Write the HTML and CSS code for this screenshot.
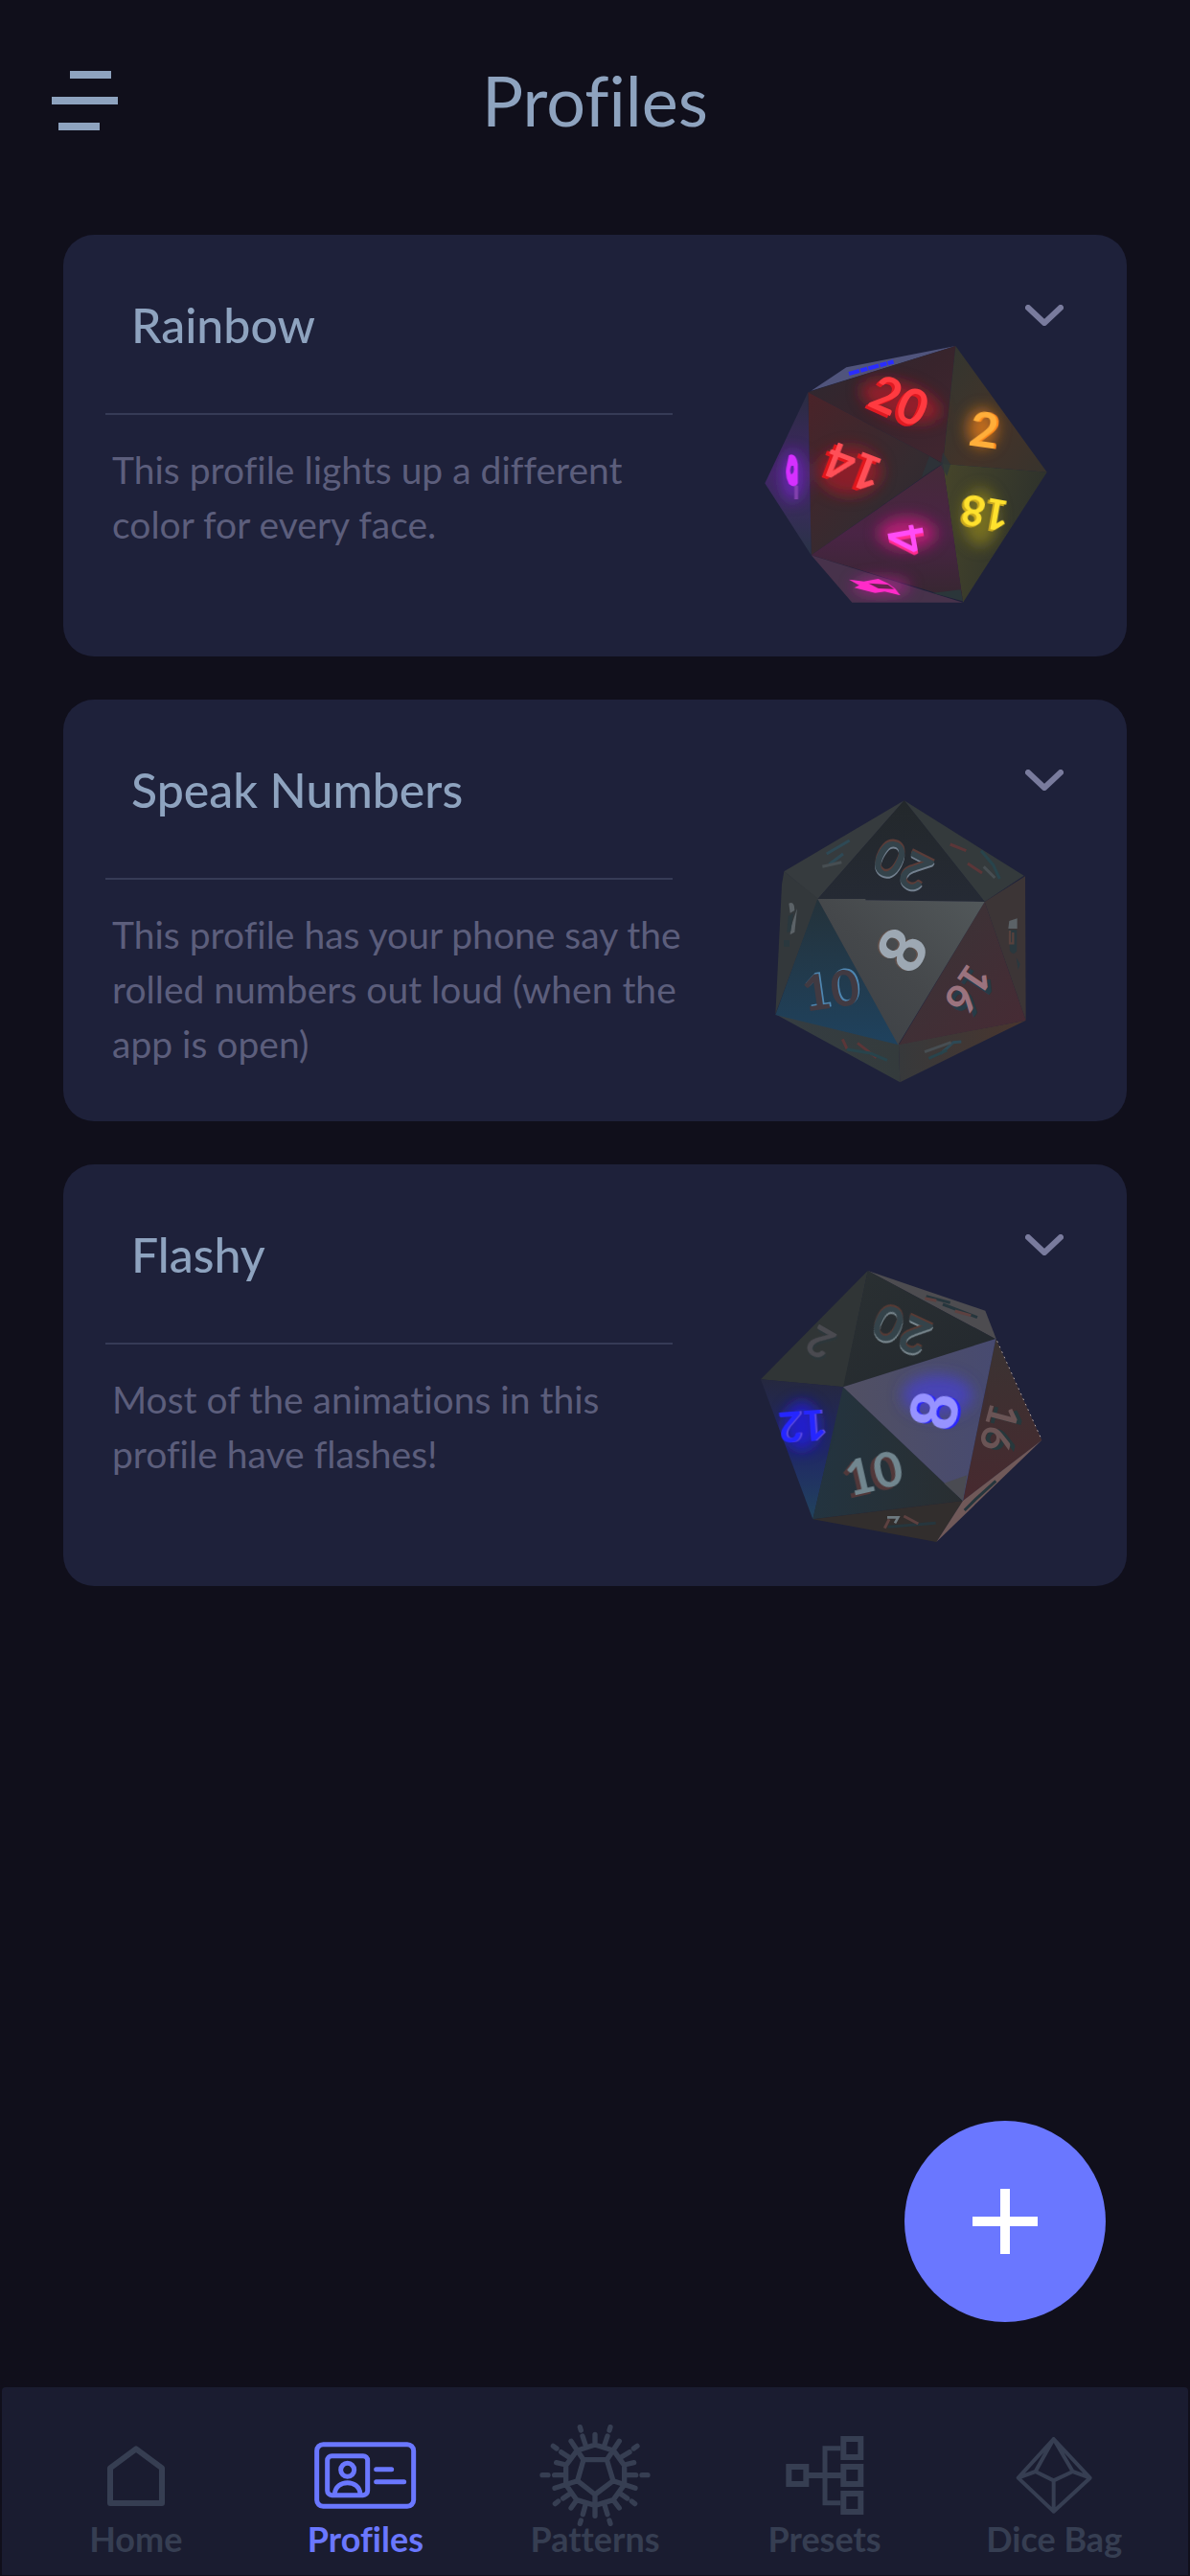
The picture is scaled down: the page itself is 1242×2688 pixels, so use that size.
FILE: index.html
```html
<!DOCTYPE html>
<html lang="en">
<head>
<meta charset="utf-8">
<meta name="viewport" content="width=device-width, initial-scale=1">
<title>Profiles</title>
<link rel="stylesheet" href="styles.css">
</head>
<body>
<header class="topbar">
  <button class="menu" type="button" aria-label="Menu">
    <svg viewBox="0 0 70 64" aria-hidden="true"><path d="M19 0h43v8H19zM0 27h69v8H0zM7 54h43v8H7z"/></svg>
  </button>
  <h1 class="title">Profiles</h1>
</header>

<main class="content">
  <section class="cards" aria-label="Profiles">
    <article class="card">
      <div class="info">
        <h2 class="name">Rainbow</h2>
        <p class="desc">This profile lights up a different color for every face.</p>
      </div>
      <div class="side">
        <button class="expand" type="button" aria-label="Expand Rainbow"><svg viewBox="0 0 40 22" aria-hidden="true"><path d="M3 3l17 16L37 3"/></svg></button>
        <svg class="die" viewBox="0 15 990 900" aria-hidden="true">
          <defs>
            <filter id="glow" x="-100%" y="-100%" width="300%" height="300%"><feGaussianBlur stdDeviation="22"/></filter>
            <clipPath id="hull1"><path d="M652 63L938 458L675 866H328L200 718L55 493L190 208L310 130Z"/></clipPath>
            <linearGradient id="a1" x1="0" y1="0" x2="1" y2="1"><stop offset="0" stop-color="#2c2a31"/><stop offset=".5" stop-color="#38242c"/><stop offset="1" stop-color="#422630"/></linearGradient>
            <linearGradient id="a2" x1="0" y1="0" x2="1" y2="1"><stop offset="0" stop-color="#4a2329"/><stop offset=".6" stop-color="#352b30"/><stop offset="1" stop-color="#29282f"/></linearGradient>
            <linearGradient id="a3" x1="0" y1="0" x2="1" y2="1"><stop offset="0" stop-color="#323630"/><stop offset=".6" stop-color="#433329"/><stop offset="1" stop-color="#37332d"/></linearGradient>
            <linearGradient id="a4" x1="0" y1="0" x2="1" y2=".3"><stop offset="0" stop-color="#46452a"/><stop offset="1" stop-color="#2d312c"/></linearGradient>
            <linearGradient id="a5" x1="0" y1="0" x2="0" y2="1"><stop offset="0" stop-color="#442a38"/><stop offset=".5" stop-color="#4a2445"/><stop offset="1" stop-color="#35272f"/></linearGradient>
            <linearGradient id="a6" x1="0" y1="0" x2="0" y2="1"><stop offset="0" stop-color="#292c40"/><stop offset=".5" stop-color="#422767"/><stop offset="1" stop-color="#293346"/></linearGradient>
          </defs>
          <path fill="#50547c" d="M200 203L310 130L652 63Z"/>
          <path fill="url(#a1)" d="M652 63L190 208L612 430Z"/>
          <path fill="url(#a2)" d="M190 208L612 430L200 718Z"/>
          <path fill="url(#a3)" d="M652 63L938 458L612 432Z"/>
          <path fill="url(#a4)" d="M612 432L938 458L675 866Z"/>
          <path fill="url(#a5)" d="M612 432L675 862L200 718Z"/>
          <path fill="url(#a6)" d="M190 208L55 493L200 718Z"/>
          <path fill="#47324b" d="M200 718L328 866H675Z"/>
          <path fill="#2b363c" opacity=".7" d="M612 395L636 434L625 470L605 436L545 474L570 408L606 430Z"/>
          <path fill="#2b363a" d="M580 836L668 826L675 862Z"/>
          <g clip-path="url(#hull1)" filter="url(#glow)">
            <ellipse cx="480" cy="235" rx="130" ry="55" fill="#b81a2a" opacity=".7" transform="rotate(18 480 235)"/>
            <ellipse cx="320" cy="455" rx="100" ry="75" fill="#a51d2a" opacity=".75"/>
            <ellipse cx="735" cy="320" rx="45" ry="60" fill="#e07b16" opacity=".8"/>
            <ellipse cx="730" cy="600" rx="55" ry="90" fill="#8f831c" opacity=".7"/>
            <ellipse cx="500" cy="650" rx="90" ry="50" fill="#d41c83" opacity=".75"/>
            <ellipse cx="142" cy="470" rx="32" ry="80" fill="#7f25d8" opacity=".7"/>
            <ellipse cx="420" cy="815" rx="90" ry="24" fill="#c6259c" opacity=".7"/>
          </g>
          <path stroke="#2a2cff" stroke-width="13" stroke-dasharray="34 4 22 3" d="M318 150L458 112"/>
          <g class="pips">
            <g transform="translate(478 230) rotate(24)"><text class="n170" fill="#e01a22" x="-6" y="10">20</text><text class="n170" fill="#ff3a40">20</text></g>
            <g transform="translate(330 448) rotate(201)"><text class="n170" fill="#e2161c" x="10" y="-8">14</text><text class="n170" fill="#ff4f57">14</text></g>
            <g transform="translate(742 320) rotate(8)"><text class="n170" fill="#ff8a1c" x="7">2</text><text class="n170" fill="#ffae3a">2</text></g>
            <g transform="translate(744 588) rotate(190)"><text class="n150" fill="#c9a81d" x="6" y="-6">18</text><text class="n150" fill="#ffe12d">18</text></g>
            <g transform="translate(494 668) rotate(-100)"><text class="n170" fill="#ff2b8d" x="-10">4</text><text class="n170" fill="#ff4cf6">4</text></g>
          </g>
          <path fill="#d530ff" fill-rule="evenodd" d="M130 405q22-10 28 28v60q-8 18-28 2q-12-22-8-50zM138 438q-8 15 0 28q12-8 6-28z"/>
          <path fill="#8140ad" d="M147 500h12v43h-12z"/>
          <path fill="#ff2bc8" d="M318 794L365 800L410 792L440 806L462 822L479 844L430 832L400 836L335 820L350 812Z"/>
          <path fill="#67234f" d="M380 806L440 810L460 824L410 822Z"/>
        </svg>
      </div>
    </article>

    <article class="card">
      <div class="info">
        <h2 class="name">Speak Numbers</h2>
        <p class="desc">This profile has your phone say the rolled numbers out loud (when the app is open)</p>
      </div>
      <div class="side">
        <button class="expand" type="button" aria-label="Expand Speak Numbers"><svg viewBox="0 0 40 22" aria-hidden="true"><path d="M3 3l17 16L37 3"/></svg></button>
        <svg class="die" viewBox="0 27 990 900" aria-hidden="true">
          <defs>
            <linearGradient id="b1" x1="0" y1="0" x2="0" y2="1"><stop offset="0" stop-color="#23282b"/><stop offset="1" stop-color="#252a34"/></linearGradient>
            <linearGradient id="b2" x1="1" y1="0" x2="0" y2="1"><stop offset="0" stop-color="#52585a"/><stop offset=".5" stop-color="#45484b"/><stop offset="1" stop-color="#3b3f44"/></linearGradient>
            <linearGradient id="b3" x1="0" y1="0" x2="0" y2="1"><stop offset="0" stop-color="#24323a"/><stop offset="1" stop-color="#1f425e"/></linearGradient>
            <linearGradient id="b4" x1="0" y1="0" x2="1" y2="1"><stop offset="0" stop-color="#383537"/><stop offset="1" stop-color="#472a34"/></linearGradient>
            <linearGradient id="b5" x1="0" y1="0" x2="1" y2="0"><stop offset="0" stop-color="#353d42"/><stop offset="1" stop-color="#343b3c"/></linearGradient>
            <linearGradient id="b6" x1="0" y1="0" x2="1" y2="0"><stop offset="0" stop-color="#37393b"/><stop offset="1" stop-color="#49352e"/></linearGradient>
          </defs>
          <path fill="#363b3e" d="M491 43L115 265L220 352Z"/>
          <path fill="#343a3c" d="M491 43L866 278L743 360Z"/>
          <path fill="#33383b" d="M115 265L108 305L88 712L222 350Z"/>
          <path fill="#3c3536" d="M743 360L870 280L872 731Z"/>
          <path fill="url(#b5)" d="M88 712L478 925L474 806Z"/>
          <path fill="url(#b6)" d="M474 806L478 925L872 731Z"/>
          <path fill="url(#b3)" d="M220 350L88 714L474 808Z"/>
          <path fill="url(#b4)" d="M743 360L872 731L474 808Z"/>
          <path fill="url(#b1)" d="M491 43L220 352L743 360Z"/>
          <path fill="url(#b2)" d="M220 351H370V355L743 360L472 808Z"/>
          <g class="pips">
            <g transform="translate(484 250) rotate(207)"><text class="n170" fill="#73808f" x="-3" y="-5">20</text><text class="n170" fill="#5a3c38" x="2" y="7">20</text><text class="n170" fill="#34434b">20</text></g>
            <g transform="translate(480 507) rotate(-59)"><text class="n200" fill="#60514c" x="-3" y="-5">8</text><text class="n200" fill="#9da8b3">8</text></g>
            <g transform="translate(260 632) rotate(-8)"><text class="n170" fill="#4e86b1" x="5" y="-4">10</text><text class="n170" fill="#413a42">10</text></g>
            <g transform="translate(695 635) rotate(124)"><text class="n150" fill="#273b47" x="4" y="-18">16</text><text class="n150" fill="#9b737e">16</text></g>
          </g>
          <g fill="none" stroke-width="9">
            <path stroke="#2e4955" d="M248 210L320 168M256 243L300 210M605 836L645 800L670 798"/>
            <path stroke="#5b3638" d="M635 180L685 200M690 240L735 270M298 790L312 820M345 802L404 848"/>
            <path stroke="#28444c" d="M312 822L385 834L438 856M568 850L625 825M732 200L770 245L790 288"/>
            <path stroke="#474e52" d="M235 250L295 236M740 250L775 285M555 830L638 800"/>
          </g>
          <path fill="#5b6267" d="M130 365q18-8 18 22l-14 8zM136 440l20-60-8 75-14 8zM820 420l25-8v32h-28z"/>
          <path fill="#2a383e" d="M128 405l16-8-8 55-12 5zM114 480h18v20h-18zM818 448h26v65q-10 20-22 0zM842 535l12 20-6 18z"/>
          <path stroke="#57413d" stroke-width="7" fill="none" d="M822 450v40h10v-34"/>
        </svg>
      </div>
    </article>

    <article class="card">
      <div class="info">
        <h2 class="name">Flashy</h2>
        <p class="desc">Most of the animations in this profile have flashes!</p>
      </div>
      <div class="side">
        <button class="expand" type="button" aria-label="Expand Flashy"><svg viewBox="0 0 40 22" aria-hidden="true"><path d="M3 3l17 16L37 3"/></svg></button>
        <svg class="die" viewBox="0 27 990 900" aria-hidden="true">
          <defs>
            <clipPath id="hull3"><path d="M377 60L745 185L922 590L592 909L205 838L42 400Z"/></clipPath>
            <linearGradient id="c1" x1="0" y1="0" x2="1" y2="1"><stop offset="0" stop-color="#2a3032"/><stop offset="1" stop-color="#23282e"/></linearGradient>
            <linearGradient id="c2" x1="0" y1="0" x2="1" y2="0"><stop offset="0" stop-color="#515063"/><stop offset="1" stop-color="#474a70"/></linearGradient>
            <linearGradient id="c3" x1="0" y1="0" x2="0" y2="1"><stop offset="0" stop-color="#25283f"/><stop offset=".5" stop-color="#202765"/><stop offset="1" stop-color="#21435d"/></linearGradient>
            <linearGradient id="c4" x1="0" y1="0" x2="1" y2="0"><stop offset="0" stop-color="#233440"/><stop offset="1" stop-color="#292e31"/></linearGradient>
            <linearGradient id="c5" x1="0" y1="0" x2="0" y2="1"><stop offset="0" stop-color="#3a3332"/><stop offset="1" stop-color="#47292f"/></linearGradient>
          </defs>
          <path fill="#303536" d="M377 60L42 400L302 424Z"/>
          <path fill="#4d4c50" d="M377 60L745 185L780 275Z"/>
          <path fill="url(#c1)" d="M377 60L300 424L780 275Z"/>
          <path fill="url(#c3)" d="M42 400L302 424L205 838Z"/>
          <path fill="url(#c4)" d="M300 424L675 780L205 838Z"/>
          <path fill="url(#c5)" d="M778 273L922 590L675 780Z"/>
          <path fill="#322e2d" d="M205 838L592 909L675 780Z"/>
          <path fill="#705959" d="M675 780L922 590L592 909Z"/>
          <path fill="url(#c2)" d="M300 424L778 273L675 780Z"/>
          <path fill="#4a4b52" d="M616 725L688 700L675 780Z"/>
          <g clip-path="url(#hull3)" filter="url(#glow)">
            <ellipse cx="595" cy="450" rx="110" ry="65" fill="#4542cf" opacity=".75"/>
            <ellipse cx="170" cy="545" rx="55" ry="75" fill="#211cf0" opacity=".75"/>
          </g>
          <g class="pips">
            <g transform="translate(480 250) rotate(205)"><text class="n170" fill="#77858c" x="-3" y="-5">20</text><text class="n170" fill="#573a34" x="2" y="7">20</text><text class="n170" fill="#34434a">20</text></g>
            <g transform="translate(580 496) rotate(-79)"><text class="n200" fill="#2925ff" y="10">8</text><text class="n200" fill="#9793ff">8</text></g>
            <g transform="translate(395 688) rotate(-13)"><text class="n170" fill="#51383a" x="-14" y="6">10</text><text class="n170" fill="#71868f">10</text></g>
            <g transform="translate(172 550) rotate(176)"><text class="n150" fill="#5a49df" x="-6">12</text><text class="n150" fill="#2526ff">12</text></g>
            <g transform="translate(793 552) rotate(105)"><text class="n150" fill="#27383c" y="-16">16</text><text class="n150" fill="#6a5455">16</text></g>
            <g transform="translate(226 288) rotate(210)"><text class="n150" fill="#2c363a" x="-6" y="-5">2</text><text class="n150" fill="#4a4a50">2</text></g>
          </g>
          <path fill="none" stroke="#26363d" stroke-width="9" d="M560 140L635 160M612 165L720 206M680 810L715 775L778 718M440 862L590 850"/>
          <path fill="none" stroke="#5d4140" stroke-width="9" d="M556 146L592 154M650 186L700 200M490 828L535 852M430 866L444 838"/>
          <path fill="none" stroke="#6e7a80" stroke-width="8" d="M438 832H472L462 850"/>
          <path fill="none" stroke="#b7a9a6" stroke-width="3" stroke-dasharray="5 13" d="M782 280L922 590"/>
        </svg>
      </div>
    </article>
  </section>

  <button class="fab" type="button" aria-label="Add profile">
    <svg viewBox="0 0 68 68" aria-hidden="true"><path d="M34 0v68M0 34h68"/></svg>
  </button>
</main>

<nav class="tabs" aria-label="Main">
  <a class="tab" href="#home">
    <svg viewBox="246 180 360 318" stroke-width="18" aria-hidden="true"><path d="M345 316L426 256L507 316V426H345Z"/></svg>
    <span>Home</span>
  </a>
  <a class="tab active" href="#profiles" aria-current="page">
    <svg viewBox="963 180 360 318" stroke-width="15" aria-hidden="true"><rect x="992" y="242" width="303" height="194" rx="20"/><rect x="1025" y="278" width="126" height="123" rx="14"/><circle cx="1088" cy="322" r="21"/><path d="M1048 398C1050 350 1126 350 1128 398M1178 320H1226M1178 359H1265"/></svg>
    <span>Profiles</span>
  </a>
  <a class="tab" href="#patterns">
    <svg viewBox="243 180 360 318" stroke-width="16" aria-hidden="true"><path d="M423 243L482 262L515 308V368L480 416L423 433L366 416L332 368V308L366 262ZM387 290H460L480 356L423 399L368 356ZM387 290L348 232M460 290L499 232M480 356L549 379M368 356L297 379M423 399V466M423 243V211M393 243L384 216M453 243L462 216M340 281L317 266M506 281L531 266M332 306L302 299M515 306L545 299M332 338H296M515 338H551M345 396L323 411M502 396L524 411M366 416L348 441M480 416L499 441M393 432L385 461M453 432L462 461M376 188L379 198M471 188L468 198M292 247L303 255M555 247L544 255M258 338H276M570 338H588M298 428L308 420M548 428L538 420M379 480L376 490M468 480L471 490"/></svg>
    <span>Patterns</span>
  </a>
  <a class="tab" href="#presets">
    <svg class="square" viewBox="62 180 360 318" stroke-width="18" aria-hidden="true"><path d="M129 312H183V366H129ZM300 225H354V282H300ZM300 312H354V366H300ZM300 396H354V453H300ZM192 339H291"/><path stroke-width="15" d="M291 254H242V425H291"/></svg>
    <span>Presets</span>
  </a>
  <a class="tab" href="#dice-bag">
    <svg viewBox="781 180 360 318" stroke-width="12" aria-hidden="true"><path d="M960 225L1074 347L960 452L849 347ZM960 225L903 327L849 347M903 327L960 355L1020 327L1074 347M1020 327L960 225M960 355V452"/></svg>
    <span>Dice Bag</span>
  </a>
</nav>
</body>
</html>
```
FILE: styles.css
```css
* {
  box-sizing: border-box;
}

body {
  margin: 0;
  min-height: 100vh;
  display: flex;
  flex-direction: column;
  background: #100f1b;
  color: #8ea3bf;
  font-family: Lato, "Open Sans", sans-serif;
  font-variant-ligatures: none;
}

button {
  padding: 0;
  border: 0;
  background: none;
  cursor: pointer;
}

svg {
  display: block;
}

.topbar {
  display: grid;
  grid-template-columns: 70px 1fr 70px;
  align-items: center;
  padding: 64px 54px 0;
}

.menu svg {
  width: 70px;
  height: 64px;
  fill: #8ea3bf;
}

.title {
  margin: 0;
  padding-bottom: 4px;
  font-size: 72px;
  line-height: 80px;
  font-weight: 400;
  text-align: center;
}

.content {
  flex: 1;
  display: flex;
  flex-direction: column;
  padding: 97px 66px 68px;
}

.cards {
  display: flex;
  flex-direction: column;
  gap: 45px;
}

.card {
  display: grid;
  grid-template-columns: 1fr 330px;
  min-height: 440px;
  padding: 0 66px 40px 44px;
  border-radius: 32px;
  background: #1e213a;
}

.name {
  margin: 0 78px 0 0;
  padding: 64px 0 62px 27px;
  border-bottom: 2px solid #363b56;
  font-size: 50px;
  line-height: 60px;
  font-weight: 500;
}

.desc {
  margin: 0;
  padding: 29px 50px 0 7px;
  color: #5c5e7c;
  font-size: 39px;
  line-height: 57px;
}

.side {
  display: flex;
  flex-direction: column;
  gap: 5px;
  padding-top: 73px;
}

.expand {
  align-self: flex-end;
}

.expand svg {
  width: 40px;
  height: 22px;
  fill: none;
  stroke: #797b9d;
  stroke-width: 6;
  stroke-linecap: round;
  stroke-linejoin: round;
}

.die {
  width: 330px;
  height: 300px;
}

.pips {
  font-weight: 700;
  text-anchor: middle;
  dominant-baseline: central;
}

.n150 {
  font-size: 130px;
}

.n170 {
  font-size: 155px;
}

.n200 {
  font-size: 200px;
  font-weight: 900;
}

.fab {
  display: grid;
  place-items: center;
  width: 210px;
  height: 210px;
  margin: auto 22px 0 auto;
  border-radius: 50%;
  background: #6a77ff;
}

.fab svg {
  width: 68px;
  height: 68px;
  stroke: #fff;
  stroke-width: 10;
}

.tabs {
  display: grid;
  grid-template-columns: repeat(5, 1fr);
  margin: 0 2px 1px;
  padding: 39px 20px 24px;
  border-radius: 4px 4px 0 0;
  background: #1a1c30;
}

.tab {
  display: flex;
  flex-direction: column;
  align-items: center;
  color: #363e52;
  font-size: 36px;
  line-height: 27px;
  font-weight: 700;
  text-decoration: none;
}

.tab.active {
  color: #6a77ff;
}

.tab svg {
  width: 120px;
  height: 106px;
  fill: none;
  stroke: currentColor;
  stroke-linecap: round;
  stroke-linejoin: round;
}

.tab .square {
  stroke-linecap: butt;
  stroke-linejoin: miter;
}
```
